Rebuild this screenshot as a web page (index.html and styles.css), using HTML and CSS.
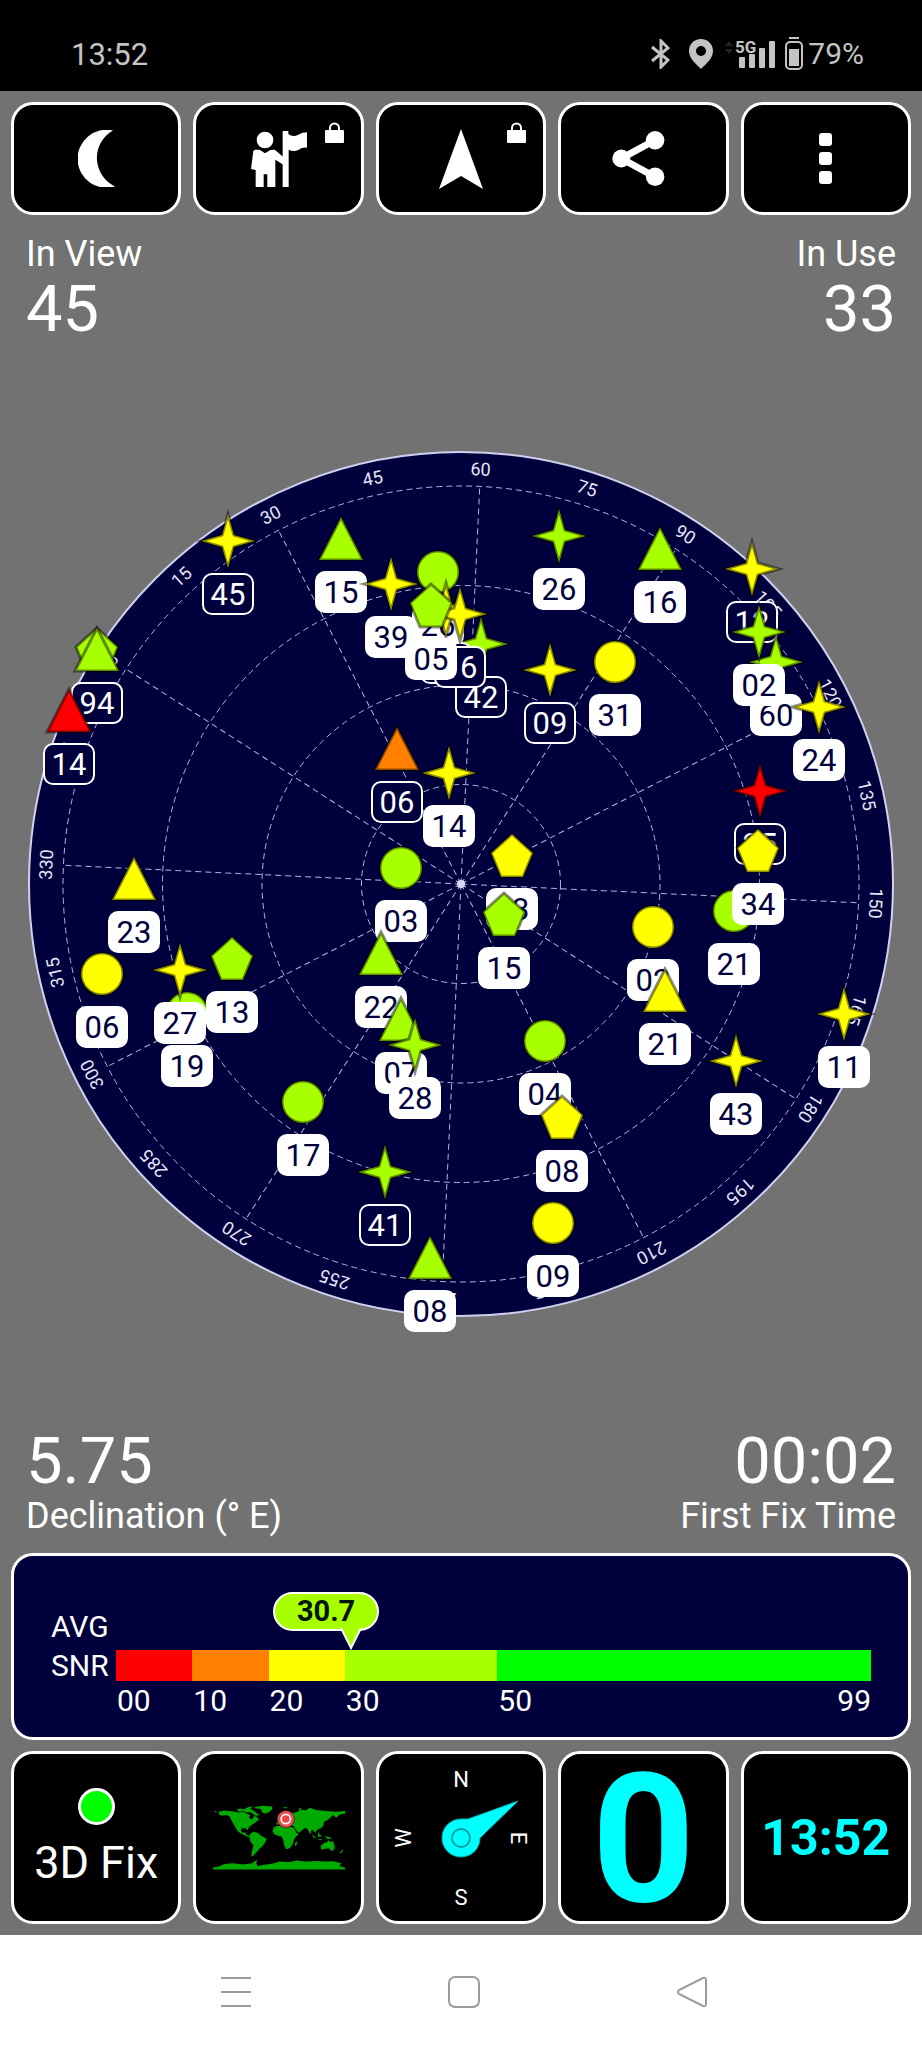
FILE: index.html
```html
<!DOCTYPE html>
<html lang="en">
<head>
    <meta charset="UTF-8">
    <meta name="viewport" content="width=device-width, initial-scale=1.0">
    <title>GPS Status</title>
    <link rel="stylesheet" href="styles.css">
</head>
<body>
    <!-- Phone status bar -->
    <header class="status-bar">
        <span>13:52</span>
        <div class="status-icons">
            <svg class="bluetooth" width="20" height="30" viewBox="0 0 20 30"><path d="M2 8 L18 21 L11 28 V2 L18 9 L2 22"/></svg>
            <svg width="24" height="30" viewBox="0 0 24 30"><path fill-rule="evenodd" d="M12 0 C5 0 0 5 0 12 C0 19 6 24 12 30 C18 24 24 19 24 12 C24 5 19 0 12 0 Z M12 7 A5 5 0 1 1 12 17 A5 5 0 1 1 12 7 Z"/></svg>
            <svg width="52" height="30" viewBox="0 0 52 30">
                <path class="data-arrows" d="M1 7 L5 2 L9 7 Z M1 10 L5 15 L9 10 Z"/>
                <text class="network" x="11" y="14">5G</text>
                <rect x="15" y="18" width="6" height="11" rx="1"/>
                <rect x="25" y="15" width="6" height="14" rx="1"/>
                <rect x="35" y="9" width="6" height="20" rx="1"/>
                <rect x="45" y="2" width="6" height="27" rx="1"/>
            </svg>
            <svg width="18" height="34" viewBox="0 0 18 34">
                <rect x="4" y="0" width="10" height="2"/>
                <rect class="battery-shell" x="1" y="5" width="16" height="27" rx="4"/>
                <rect x="4" y="12" width="10" height="17"/>
            </svg>
            <span>79%</span>
        </div>
    </header>

    <main class="app">
        <!-- Toolbar -->
        <div class="toolbar">
            <button class="tile" aria-label="Night mode">
                <svg width="37" height="57" viewBox="0 0 37 57"><path d="M35 .5 A29 29 0 1 0 37 56.5 A31.5 31.5 0 0 1 35 .5 Z"/></svg>
            </button>
            <button class="tile" aria-label="Waypoint">
                <svg width="56" height="56" viewBox="0 0 168 168">
                    <circle cx="42" cy="27" r="25"/>
                    <path d="M12 56 H26 L42 67 L58 57 L71 56 L97 78 V101 L73 86 V168 H49 V130 H38 V168 H14 V117 L0 114 L7 60 Z"/>
                    <path d="M95 0 H112 V9 Q126 20 142 11 Q154 4 168 4 V50 Q154 48 142 57 Q128 64 113 56 V168 H95 Z"/>
                </svg>
                <svg class="lock" width="19" height="21" viewBox="0 0 19 21"><path class="shackle" d="M5 9 V6 A4.500 4.500 0 0 1 14 6 V9"/><rect y="8" width="19" height="13" rx="1"/></svg>
            </button>
            <button class="tile" aria-label="Navigate">
                <svg width="44" height="60" viewBox="0 0 44 60"><path d="M22 0 L44 60 L22 47 L0 60 Z"/></svg>
                <svg class="lock" width="19" height="21" viewBox="0 0 19 21"><path class="shackle" d="M5 9 V6 A4.500 4.500 0 0 1 14 6 V9"/><rect y="8" width="19" height="13" rx="1"/></svg>
            </button>
            <button class="tile" aria-label="Share">
                <svg width="63" height="55" viewBox="0 0 188 166">
                    <path class="share-line" d="M128 28 L27 83 L128 138"/>
                    <circle cx="27" cy="83" r="27"/><circle cx="129" cy="28" r="28"/><circle cx="129" cy="138" r="28"/>
                </svg>
            </button>
            <button class="tile" aria-label="Menu">
                <svg width="13" height="51" viewBox="0 0 13 51"><rect width="13" height="13" rx="3"/><rect y="19" width="13" height="13" rx="3"/><rect y="38" width="13" height="13" rx="3"/></svg>
            </button>
        </div>

        <div class="stats">
            <div class="stat">
                <div class="stat-label">In View</div>
                <div class="stat-value">45</div>
            </div>
            <div class="stat right">
                <div class="stat-label">In Use</div>
                <div class="stat-value">33</div>
            </div>
        </div>

        <!-- Sky plot, filled in by sky.js -->
        <div class="sky">
            <svg id="sky" viewBox="0 0 922 892" role="img" aria-label="Satellites in view"></svg>
        </div>

        <div class="stats">
            <div class="stat">
                <div class="stat-value">5.75</div>
                <div class="stat-label">Declination (° E)</div>
            </div>
            <div class="stat right">
                <div class="stat-value">00:02</div>
                <div class="stat-label">First Fix Time</div>
            </div>
        </div>

        <!-- Average signal -->
        <section class="snr">
            <div class="snr-title">AVG<br>SNR</div>
            <div class="snr-scale">
                <div class="callout" style="left: 31%">30.7
                    <svg width="22" height="22" viewBox="0 0 22 22"><path d="M1 0 L11 20 L21 0"/></svg>
                </div>
                <div class="band s00">00</div>
                <div class="band s10">10</div>
                <div class="band s20">20</div>
                <div class="band s30">30</div>
                <div class="band s50"><span>50</span><span>99</span></div>
            </div>
        </section>

        <!-- Bottom tiles -->
        <div class="tiles">
            <button class="tile fix"><span class="fix-light"></span>3D Fix</button>
            <button class="tile" aria-label="Map">
                <svg width="132" height="66" viewBox="0 0 397 198">
                    <g class="land">
                        <path d="M2 20 L10 18 L10 22 Z M18 20 L34 16 L62 19 L76 22 L92 20 L98 24 L112 30 L108 38 L118 44 L124 32 L132 36 L139 44 L126 53 L116 60 L108 66 L105 76 L98 70 L86 70 L84 78 L92 84 L97 80 L98 88 L108 92 L112 97 L100 94 L86 86 L76 80 L68 68 L62 58 L56 46 L50 34 L40 30 L28 32 L18 28 Z"/>
                        <path d="M70 15 L82 10 L92 13 L106 6 L122 4 L112 10 L126 20 L140 30 L128 32 L114 22 L102 22 L92 18 L80 20 Z"/>
                        <path d="M124 6 L150 2 L178 4 L178 13 L170 20 L158 26 L148 22 L144 12 L130 10 Z"/>
                        <path d="M112 86 L122 80 L136 84 L142 91 L161 101 L157 113 L148 124 L141 130 L132 140 L122 152 L115 154 L117 140 L122 122 L112 108 L109 98 Z"/>
                        <path d="M183 66 L195 62 L214 64 L232 66 L244 68 L250 82 L258 89 L250 94 L243 104 L240 117 L231 130 L220 133 L214 120 L211 104 L207 95 L196 92 L184 88 L179 78 Z M248 112 L254 108 L250 124 L246 120 Z"/>
                        <path d="M190 52 L202 46 L210 26 L222 18 L232 24 L250 22 L264 13 L278 16 L292 8 L310 15 L340 18 L366 20 L397 18 L397 26 L382 28 L370 38 L362 30 L352 38 L346 44 L334 50 L332 62 L324 70 L312 76 L308 84 L300 74 L296 76 L293 88 L284 72 L276 68 L268 76 L258 84 L250 74 L242 62 L230 62 L222 54 L210 60 L202 54 L194 60 Z"/>
                        <path d="M258 10 L268 8 L258 16 Z M210 6 L226 7 L216 10 Z M298 84 L304 94 L312 98 L302 98 Z M316 78 L320 88 L328 94 L316 96 Z M310 102 L330 102 L324 105 Z M334 94 L350 96 L358 102 L344 101 Z"/>
                        <path d="M324 122 L334 114 L342 112 L348 106 L354 112 L360 107 L366 122 L365 132 L357 139 L348 130 L336 132 L326 134 Z M382 142 L390 134 L392 137 L384 146 Z"/>
                        <path d="M0 188 L18 185 L34 177 L60 175 L90 179 L118 175 L124 170 L133 165 L130 176 L134 183 L150 180 L180 176 L200 170 L230 171 L252 167 L280 170 L306 168 L340 170 L362 169 L386 175 L380 183 L397 188 V194 H0 Z"/>
                    </g>
                    <circle class="here-ring" cx="219" cy="42" r="26"/>
                    <circle class="here" cx="219" cy="42" r="14"/>
                </svg>
            </button>
            <button class="tile" aria-label="Compass">
                <svg class="compass" width="160" height="160" viewBox="-80 -80 160 160">
                    <text x="0" y="-51">N</text>
                    <text x="0" y="67">S</text>
                    <text transform="translate(-50 0) rotate(-90)" y="0">W</text>
                    <text transform="translate(50 0) rotate(90)" y="0">E</text>
                    <path class="needle" d="M7 -19 L57 -37 L19 0 A19 19 0 1 1 0 -19 Z"/>
                    <circle class="hub" r="9"/>
                </svg>
            </button>
            <button class="tile speed">0</button>
            <button class="tile clock">13:52</button>
        </div>
    </main>

    <!-- Phone navigation -->
    <nav class="nav-bar">
        <button aria-label="Recent apps"><svg width="32" height="32" viewBox="0 0 32 32"><path d="M1 2 H31 M1 16 H31 M1 30 H31"/></svg></button>
        <button aria-label="Home"><svg width="32" height="32" viewBox="0 0 32 32"><rect x="1" y="1" width="30" height="30" rx="6"/></svg></button>
        <button aria-label="Back"><svg width="32" height="32" viewBox="0 0 32 32"><path d="M27 2 L3 14 Q1 16 3 18 L27 30 Q30 31 30 28 V4 Q30 1 27 2 Z"/></svg></button>
    </nav>

    <script src="sky.js"></script>
</body>
</html>
```
FILE: styles.css
```css
body {
    margin: 0;
    min-height: 100vh;
    display: flex;
    flex-direction: column;
    font-family: Roboto, sans-serif;
    background-color: #727272;
    color: white;
}

svg {
    display: block;
    fill: currentColor;
}

button {
    font-family: inherit;
    color: inherit;
    padding: 0;
    cursor: pointer;
}

/* Status bar */
.status-bar {
    display: flex;
    justify-content: space-between;
    height: 91px;
    padding: 18px 58px 0 71px;
    box-sizing: border-box;
    background-color: black;
    color: #c4c4c4;
    font-size: 31px;
    line-height: 73px;
}

.status-icons {
    display: flex;
    align-items: center;
    gap: 19px;
    height: 71px;
}

.status-icons svg:nth-of-type(3) {
    margin-left: -8px;
    margin-right: -10px;
}

.status-icons span {
    margin-left: -14px;
    font-size: 30px;
}

.bluetooth {
    fill: none;
    stroke: currentColor;
    stroke-width: 3;
}

.data-arrows {
    fill: #222;
}

.network {
    font-size: 17px;
    font-weight: bold;
}

.battery-shell {
    fill: none;
    stroke: currentColor;
    stroke-width: 2;
}

/* Main screen */
.app {
    flex: 1;
    display: flex;
    flex-direction: column;
    padding: 11px;
}

.toolbar,
.tiles {
    display: grid;
    grid-template-columns: repeat(5, 1fr);
    gap: 12px;
}

.tile {
    position: relative;
    display: flex;
    flex-direction: column;
    align-items: center;
    justify-content: center;
    min-width: 0;
    border: 3px solid white;
    border-radius: 22px;
    background-color: black;
}

.toolbar .tile {
    height: 113px;
}

.tiles .tile {
    height: 173px;
}

.lock {
    position: absolute;
    top: 17px;
    right: 17px;
}

.shackle {
    fill: none;
    stroke: white;
    stroke-width: 2;
}

.share-line {
    fill: none;
    stroke: white;
    stroke-width: 21;
}

/* Numbers in the corners */
.stats {
    display: flex;
    justify-content: space-between;
    padding: 16px 15px 14px;
}

.stat {
    display: flex;
    flex-direction: column;
    gap: 2px;
}

.stat-label {
    font-size: 36px;
    line-height: 46px;
}

.stat-value {
    font-size: 65px;
    line-height: 60px;
}

.right {
    text-align: right;
}

/* Sky plot */
.sky {
    flex: 1;
    display: flex;
    align-items: center;
    margin: 0 -11px;
}

.sky svg {
    width: 100%;
    overflow: visible;
}

.disc {
    fill: #00003c;
    stroke: #d0d0f0;
    stroke-width: 2;
}

.grid-line {
    fill: none;
    stroke: #b4b4dc;
    stroke-width: 1;
    stroke-dasharray: 6 4;
}

.centre {
    fill: #d8d8f0;
}

.azimuth {
    fill: #e6e6fa;
    font-size: 18px;
    text-anchor: middle;
}

.shape {
    stroke: rgba(0, 0, 0, 0.45);
    stroke-width: 3;
}

.lime { fill: #a8ff00; }
.yellow { fill: #ffff00; }
.orange { fill: #ff8000; }
.red { fill: #ff0000; }

.tag {
    fill: white;
    stroke: white;
    stroke-width: 2;
}

.prn {
    fill: #00003c;
    font-size: 31px;
    text-anchor: middle;
}

.unused .tag {
    fill: #00003c;
}

.unused .prn {
    fill: white;
}

/* Average signal */
.snr {
    display: flex;
    padding: 51px 37px 17px;
    margin-bottom: 11px;
    border: 3px solid white;
    border-radius: 22px;
    background-color: #00003c;
    font-size: 30px;
    line-height: 39px;
}

.snr-title {
    flex: 0 0 65px;
}

.snr-scale {
    position: relative;
    flex: 1;
    display: flex;
    margin-top: 43px;
}

.band {
    border-top: 31px solid;
    text-indent: 1px;
    flex-basis: 0;
}

.s00 { flex-grow: 10; border-color: #ff0000; }
.s10 { flex-grow: 10; border-color: #ff8000; }
.s20 { flex-grow: 10; border-color: #ffff00; }
.s30 { flex-grow: 20; border-color: #a8ff00; }

.s50 {
    flex-grow: 49;
    display: flex;
    justify-content: space-between;
    border-color: #00ff00;
}

.callout {
    position: absolute;
    top: -58px;
    width: 102px;
    margin-left: -77px;
    border: 2px solid white;
    border-radius: 20px;
    background-color: #a8ff00;
    color: #00140a;
    font-size: 29px;
    font-weight: bold;
    line-height: 35px;
    text-align: center;
}

.callout svg {
    position: absolute;
    left: 65px;
    top: 34px;
    fill: #a8ff00;
    stroke: white;
    stroke-width: 2;
}

/* Bottom tiles */
.fix {
    gap: 12px;
    font-size: 45px;
    line-height: 51px;
}

.fix-light {
    width: 31px;
    height: 31px;
    border: 3px solid white;
    border-radius: 50%;
    background-color: #00ff00;
}

.land {
    fill: #00aa00;
}

.here-ring {
    fill: #e05050;
    stroke: #301010;
    stroke-width: 2;
}

.here {
    fill: #e84848;
    stroke: white;
    stroke-width: 5;
}

.compass text {
    font-size: 22px;
    text-anchor: middle;
}

.needle {
    fill: #00ffff;
    stroke: #00b4b4;
    stroke-width: 1;
}

.hub {
    fill: #00ffff;
    stroke: #00a0a0;
    stroke-width: 2;
}

.speed,
.clock {
    color: #00ffff;
    font-weight: bold;
}

.speed {
    font-size: 180px;
    line-height: 167px;
    padding-top: 3px;
}

.clock {
    font-size: 50px;
}

/* Navigation bar */
.nav-bar {
    display: flex;
    height: 113px;
    padding: 0 116px 0 122px;
    background-color: white;
}

.nav-bar button {
    flex: 1;
    display: flex;
    align-items: center;
    justify-content: center;
    border: none;
    background: none;
}

.nav-bar svg {
    fill: none;
    stroke: #9c9c9c;
    stroke-width: 2;
}
```
FILE: sky.js
```js
var CX = 461;
var CY = 446;
var RADIUS = 432;
var HORIZON = 398;
var HEADING = 57.3; // azimuth at the top of the plot

var SHAPES = {
    circle: 'M-21 0 A21 21 0 1 1 21 0 A21 21 0 1 1 -21 0 Z',
    triangle: 'M0 -22 L22 21 L-22 21 Z',
    pentagon: 'M0 -22 L21 -3 L11 21 L-11 21 L-21 -3 Z',
    star: 'M0 -27 L6 -6 L27 0 L6 6 L0 27 L-6 6 L-27 0 L-6 -6 Z'
};

// x, y, shape, colour, number, used in fix
var satellites = [
    [228, 103, 'star', 'yellow', '45', false],
    [341, 101, 'triangle', 'lime', '15', true],
    [391, 146, 'star', 'yellow', '39', true],
    [481, 206, 'star', 'lime', '42', false],
    [438, 134, 'circle', 'lime', '26', true],
    [446, 172, 'star', 'yellow', '33', false],
    [460, 176, 'star', 'yellow', '16', false],
    [431, 168, 'pentagon', 'lime', '05', true],
    [97, 212, 'pentagon', 'lime', '36', false],
    [97, 212, 'triangle', 'lime', '94', false],
    [69, 273, 'triangle', 'red', '14', false],
    [559, 98, 'star', 'lime', '26', true],
    [660, 111, 'triangle', 'lime', '16', true],
    [752, 131, 'star', 'yellow', '12', false],
    [776, 224, 'star', 'lime', '60', true],
    [759, 194, 'star', 'lime', '02', true],
    [819, 269, 'star', 'yellow', '24', true],
    [550, 232, 'star', 'yellow', '09', false],
    [615, 224, 'circle', 'yellow', '31', true],
    [397, 311, 'triangle', 'orange', '06', false],
    [449, 335, 'star', 'yellow', '14', true],
    [401, 430, 'circle', 'lime', '03', true],
    [134, 441, 'triangle', 'yellow', '23', true],
    [102, 536, 'circle', 'yellow', '06', true],
    [187, 575, 'circle', 'lime', '19', true],
    [180, 532, 'star', 'yellow', '27', true],
    [232, 521, 'pentagon', 'lime', '13', true],
    [381, 516, 'triangle', 'lime', '22', true],
    [401, 582, 'triangle', 'lime', '07', true],
    [415, 607, 'star', 'lime', '28', true],
    [303, 664, 'circle', 'lime', '17', true],
    [385, 734, 'star', 'lime', '41', false],
    [430, 820, 'triangle', 'lime', '08', true],
    [760, 353, 'star', 'red', '25', false],
    [734, 473, 'circle', 'lime', '21', true],
    [758, 413, 'pentagon', 'yellow', '34', true],
    [512, 418, 'pentagon', 'yellow', '03', true],
    [504, 477, 'pentagon', 'lime', '15', true],
    [653, 489, 'circle', 'yellow', '02', true],
    [665, 553, 'triangle', 'yellow', '21', true],
    [844, 576, 'star', 'yellow', '11', true],
    [736, 623, 'star', 'yellow', '43', true],
    [545, 603, 'circle', 'lime', '04', true],
    [562, 680, 'pentagon', 'yellow', '08', true],
    [553, 785, 'circle', 'yellow', '09', true]
];

function drawGrid() {
    var out = '<circle class="disc" cx="' + CX + '" cy="' + CY + '" r="' + RADIUS + '"/>';

    for (var ring = 1; ring <= 4; ring++) {
        out += '<circle class="grid-line" cx="' + CX + '" cy="' + CY + '" r="' + ring * HORIZON / 4 + '"/>';
    }

    for (var az = 0; az < 360; az += 15) {
        out += '<g transform="translate(' + CX + ' ' + CY + ') rotate(' + (az - HEADING) + ')">';
        if (az % 30 === 0) {
            out += '<path class="grid-line" d="M0 0 V-396"/>';
        }
        out += '<text class="azimuth" y="-409">' + az + '</text></g>';
    }

    return out + '<circle class="centre" cx="' + CX + '" cy="' + CY + '" r="4"/>';
}

function drawSatellite(sat) {
    return '<g class="' + (sat[5] ? 'used' : 'unused') + '" transform="translate(' + sat[0] + ' ' + sat[1] + ')">' +
        '<path class="shape ' + sat[3] + '" d="' + SHAPES[sat[2]] + '"/>' +
        '<rect class="tag" x="-25" y="33" width="50" height="40" rx="9"/>' +
        '<text class="prn" y="64">' + sat[4] + '</text></g>';
}

document.getElementById('sky').innerHTML = drawGrid() + satellites.map(drawSatellite).join('');
```
